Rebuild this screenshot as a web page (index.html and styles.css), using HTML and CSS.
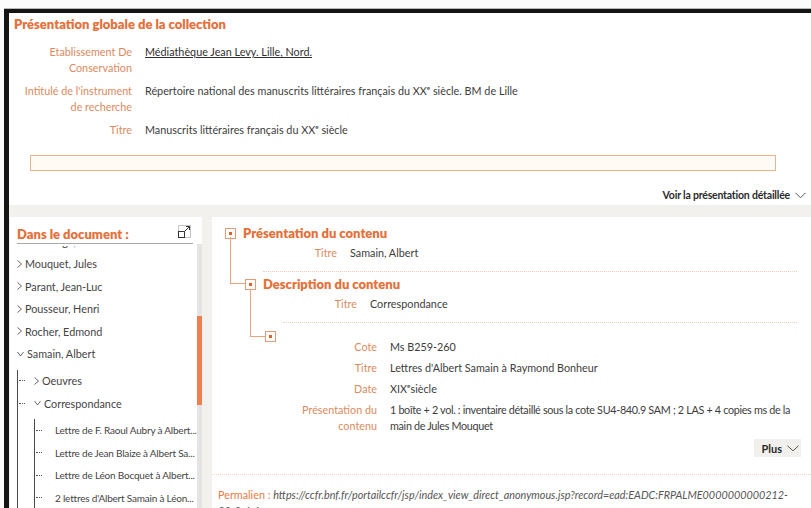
FILE: index.html
```html
<!DOCTYPE html>
<html lang="fr">
<head>
<meta charset="utf-8">
<title>Manuscrits littéraires français du XXe siècle</title>
<link rel="stylesheet" href="styles.css">
</head>
<body>
<div class="frame">
  <section class="overview">
    <h2 class="overview-title">Présentation globale de la collection</h2>
    <dl class="facts">
      <dt>Etablissement De Conservation</dt>
      <dd><a class="place-link" href="#">Médiathèque Jean Levy. Lille, Nord.</a></dd>
      <dt>Intitulé de l'instrument de recherche</dt>
      <dd>Répertoire national des manuscrits littéraires français du XX<sup>e</sup> siècle. BM de Lille</dd>
      <dt>Titre</dt>
      <dd>Manuscrits littéraires français du XX<sup>e</sup> siècle</dd>
    </dl>
    <div class="note-box"></div>
    <div class="more-row">
      <button class="more-link" type="button">Voir la présentation détaillée
        <svg class="chev-down" width="11" height="7" viewBox="0 0 11 7"><polyline points="0.5,0.8 5.5,5.8 10.5,0.8" fill="none" stroke="#555" stroke-width="1"/></svg>
      </button>
    </div>
  </section>

  <div class="workspace">
    <aside class="outline">
      <div class="outline-head">
        <h3 class="outline-title">Dans le document :</h3>
        <svg class="expand-icon" width="13" height="13" viewBox="0 0 13 13">
          <rect x="0.5" y="0.5" width="12" height="12" fill="none" stroke="#8a8a8a" stroke-dasharray="1 1"/>
          <rect x="0.5" y="6.5" width="6" height="6" fill="#fff" stroke="#333"/>
          <line x1="6.5" y1="6.5" x2="11.5" y2="1.5" stroke="#333"/>
          <polyline points="8,1.5 11.5,1.5 11.5,5" fill="none" stroke="#333"/>
        </svg>
      </div>
      <div class="outline-body">
        <div class="outline-scroll">
          <ul class="tree">
            <li class="tree-item"><span class="caret caret-right"></span>Morhange, Pierre</li>
            <li class="tree-item"><span class="caret caret-right"></span>Mouquet, Jules</li>
            <li class="tree-item"><span class="caret caret-right"></span>Parant, Jean-Luc</li>
            <li class="tree-item"><span class="caret caret-right"></span>Pousseur, Henri</li>
            <li class="tree-item"><span class="caret caret-right"></span>Rocher, Edmond</li>
            <li class="tree-branch">
              <div class="tree-item"><span class="caret caret-down"></span>Samain, Albert</div>
              <ul class="tree-children">
                <li class="tree-item sub"><span class="twig"></span><span class="caret caret-right"></span>Oeuvres</li>
                <li class="tree-branch">
                  <div class="tree-item sub"><span class="twig"></span><span class="caret caret-down"></span>Correspondance</div>
                  <ul class="tree-children deep">
                    <li class="tree-item leaf"><span class="twig"></span><span class="leaf-text">Lettre de F. Raoul Aubry à Albert...</span></li>
                    <li class="tree-item leaf"><span class="twig"></span><span class="leaf-text">Lettre de Jean Blaize à Albert Sa...</span></li>
                    <li class="tree-item leaf"><span class="twig"></span><span class="leaf-text">Lettre de Léon Bocquet à Albert...</span></li>
                    <li class="tree-item leaf"><span class="twig"></span><span class="leaf-text">2 lettres d'Albert Samain à Léon...</span></li>
                  </ul>
                </li>
              </ul>
            </li>
          </ul>
        </div>
        <div class="scrollbar"><div class="scroll-thumb"></div></div>
      </div>
    </aside>

    <main class="record">
      <div class="node">
        <div class="node-head"><span class="node-box"></span>Présentation du contenu</div>
        <dl class="fields">
          <dt>Titre</dt><dd>Samain, Albert</dd>
        </dl>
        <div class="node-sep"></div>

        <div class="node nested">
          <div class="node-head linked"><span class="node-box"></span>Description du contenu</div>
          <dl class="fields">
            <dt>Titre</dt><dd>Correspondance</dd>
          </dl>
          <div class="node-sep"></div>

          <div class="node nested">
            <div class="node-head linked bare"><span class="node-box"></span></div>
            <dl class="fields tight">
              <dt>Cote</dt><dd>Ms B259-260</dd>
              <dt>Titre</dt><dd>Lettres d'Albert Samain à Raymond Bonheur</dd>
              <dt>Date</dt><dd>XIX<sup>e</sup>siècle</dd>
              <dt>Présentation du contenu</dt><dd class="long">1 boîte + 2 vol. : inventaire détaillé sous la cote SU4-840.9 SAM ; 2 LAS + 4 copies ms de la main de Jules Mouquet</dd>
            </dl>
          </div>
        </div>
      </div>

      <div class="plus-row">
        <button class="plus-btn" type="button">Plus
          <svg width="12" height="7" viewBox="0 0 12 7"><polyline points="0.5,0.8 6,5.8 11.5,0.8" fill="none" stroke="#555" stroke-width="1"/></svg>
        </button>
      </div>

      <p class="permalink"><span class="permalink-label">Permalien :</span> <span class="permalink-url">https://ccfr.bnf.fr/portailccfr/jsp/index_view_direct_anonymous.jsp?record=ead:EADC:FRPALME0000000000212-<wbr>22-2-6-1</span></p>
    </main>
  </div>
</div>
</body>
</html>
```

FILE: styles.css
```css
* { box-sizing: border-box; }

html, body {
  margin: 0;
  height: 100%;
  overflow: hidden;
}

body {
  background: #fbfbfb;
  font-family: "Lato", "Noto Sans", sans-serif;
  font-size: 10.8px;
  color: #3d3d3d;
}

sup {
  font-size: 0.6em;
  line-height: 0;
}

/* outer window chrome: heavy dark edge on top and left */
.frame {
  margin: 9px 0 0 4px;
  height: calc(100% - 9px);
  border-top: 4px solid #141414;
  border-left: 5px solid #141414;
  box-shadow: 0 -1px 0 #b9b9b9;
  background: #fff;
  display: flex;
  flex-direction: column;
}

/* ---------- collection overview ---------- */
.overview {
  padding: 3px 5px 0 5px;
  flex: none;
}

.overview-title {
  margin: 0;
  font-size: 13px;
  line-height: 16px;
  font-weight: 800;
  color: #e5703a;
}

.facts {
  display: grid;
  grid-template-columns: 110px 1fr;
  column-gap: 13px;
  row-gap: 7px;
  margin: 12px 0 0 8px;
  line-height: 16px;
}

.facts dt {
  text-align: right;
  color: #dc8a60;
}

.facts dd {
  margin: 0;
  color: #3d3d3d;
}

.place-link {
  color: #2f2f2f;
  text-decoration: underline;
}

.note-box {
  margin: 17px 30px 0 16px;
  height: 16px;
  border: 1px solid #e9b38b;
  background: #fffaf4;
}

.more-row {
  display: flex;
  justify-content: flex-end;
  padding: 16px 0 2px;
}

.more-link {
  font: inherit;
  font-weight: 700;
  font-size: 10.5px;
  color: #2b2b2b;
  background: none;
  border: 0;
  padding: 0;
  height: 16px;
  display: flex;
  align-items: center;
  gap: 5px;
  letter-spacing: -0.2px;
}

/* ---------- lower area: outline + record ---------- */
.workspace {
  flex: 1;
  min-height: 0;
  background: #f2f1ee;
  padding-top: 12px;
  display: grid;
  grid-template-columns: 192px 1fr;
  column-gap: 10px;
  padding-left: 1px;
}

.outline {
  background: #fff;
  display: flex;
  flex-direction: column;
  min-height: 0;
  padding-left: 7px;
}

.outline-head {
  display: flex;
  align-items: center;
  justify-content: space-between;
  margin-top: 7px;
  margin-right: 9px;
  height: 20px;
  border-bottom: 1px solid #a9a9a9;
}

.outline-title {
  margin: 0;
  font-size: 13px;
  font-weight: 800;
  color: #e5703a;
  line-height: 18px;
}

.expand-icon {
  margin-right: 2px;
  position: relative;
  top: -2px;
}

.outline-body {
  flex: 1;
  min-height: 0;
  display: flex;
}

.outline-scroll {
  flex: 1;
  overflow: hidden;
  margin-top: 2px;
}

.tree,
.tree-children {
  list-style: none;
  margin: 0;
  padding: 0;
}

.tree {
  margin-top: -16px;
}

.tree-item {
  height: 22.5px;
  display: flex;
  align-items: center;
  white-space: nowrap;
  color: #444;
}

.caret {
  width: 5px;
  height: 8px;
  margin-right: 3px;
  flex: none;
  background-repeat: no-repeat;
}

.caret-right {
  background-image: url("data:image/svg+xml,%3Csvg xmlns='http://www.w3.org/2000/svg' width='5' height='8'%3E%3Cpolyline points='0.5,0.5 4.5,4 0.5,7.5' fill='none' stroke='%23555' stroke-width='0.9'/%3E%3C/svg%3E");
}

.caret-down {
  width: 7px;
  background-image: url("data:image/svg+xml,%3Csvg xmlns='http://www.w3.org/2000/svg' width='7' height='8'%3E%3Cpolyline points='0.5,2 3.5,6 6.5,2' fill='none' stroke='%23555' stroke-width='0.9'/%3E%3C/svg%3E");
}

.tree-children {
  margin-top: 4.5px;
  border-left: 1px solid #4a4a4a;
}

.tree-children.deep {
  margin-left: 16px;
}

.twig {
  width: 6px;
  margin: 0 9px 0 1px;
  border-top: 1px dotted #555;
  flex: none;
}

.tree-item.leaf .twig {
  margin-right: 13px;
}

.leaf-text {
  font-size: 10px;
  letter-spacing: -0.2px;
}

.scrollbar {
  width: 5px;
  flex: none;
  background: #e4e4e4;
  display: flex;
  flex-direction: column;
}

.scroll-thumb {
  margin-top: 72px;
  height: 89px;
  background: #ef7f4e;
}

/* ---------- record detail ---------- */
.record {
  background: #fff;
  padding: 7px 10px 0 13px;
  min-height: 0;
  overflow: hidden;
}

.node {
  position: relative;
}

.node.nested {
  margin-left: 20px;
}

.node-head {
  position: relative;
  display: flex;
  align-items: center;
  gap: 7px;
  height: 18px;
  font-size: 13px;
  font-weight: 800;
  color: #e5703a;
}

.node-head.bare {
  height: 11px;
  margin-top: 8px;
}

/* elbow connector from the parent box down to this box */
.node-head.linked::before {
  content: "";
  position: absolute;
  left: -15px;
  bottom: 50%;
  width: 15px;
  height: 46px;
  border-left: 1px solid #eaa27f;
  border-bottom: 1px solid #eaa27f;
}

.node-box {
  position: relative;
  width: 11px;
  height: 11px;
  border: 1px solid #e39c79;
  background: #fff;
  display: flex;
  align-items: center;
  justify-content: center;
  flex: none;
}

.node-box::after {
  content: "";
  width: 3px;
  height: 3px;
  background: #e0622b;
}

.fields {
  display: grid;
  grid-template-columns: 90px 1fr;
  column-gap: 13px;
  row-gap: 5px;
  margin: 3px 0 0 22px;
  line-height: 16px;
}

.fields.tight {
  margin-top: -3px;
}

.fields dt {
  text-align: right;
  color: #dc8a60;
}

.fields dd {
  margin: 0;
  color: #3d3d3d;
}

.fields dd.long {
  letter-spacing: -0.32px;
}

.node-sep {
  margin: 10px 4px 3px 38px;
  border-top: 1px dotted #efcdb8;
}

.plus-row {
  display: flex;
  justify-content: flex-end;
  margin: 5px 0 0 0;
}

.plus-btn {
  font: inherit;
  font-size: 11px;
  font-weight: 700;
  color: #2b2b2b;
  background: #f1f0ed;
  border: 0;
  height: 18px;
  padding: 0 2px 0 7px;
  display: flex;
  align-items: center;
  gap: 5px;
}

.permalink {
  margin: 17px -10px 0 -13px;
  padding: 12px 14px 0 6px;
  border-top: 1px dotted #f0d2bf;
  line-height: 16px;
  overflow-wrap: anywhere;
}

.permalink-label {
  color: #e87a44;
}

.permalink-url {
  font-style: italic;
  color: #555;
}
```
